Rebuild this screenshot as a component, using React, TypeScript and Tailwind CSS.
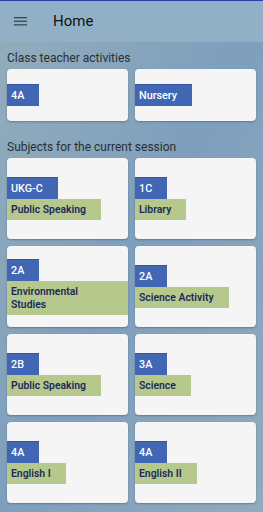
import React from "react";

type Subject = {
  cls: string
  name?: string
}

const teacherClasses: Subject[] = [{ cls: "4A" }, { cls: "Nursery" }];

const subjects: Subject[] = [
  { cls: "UKG-C", name: "Public Speaking" },
  { cls: "1C", name: "Library" },
  { cls: "2A", name: "Environmental Studies" },
  { cls: "2A", name: "Science Activity" },
  { cls: "2B", name: "Public Speaking" },
  { cls: "3A", name: "Science" },
  { cls: "4A", name: "English I" },
  { cls: "4A", name: "English II" },
];

function ClassCard({ item, tall }: { item: Subject; tall?: boolean }) {
  return (
    <div
      className={
        "flex flex-col justify-center items-start rounded-[4px] bg-[#f5f5f5] shadow-[0_1px_2px_rgba(0,0,0,0.25)] " +
        (tall ? "h-[81px]" : "h-[52px]")
      }
    >
      <div className="h-[22px] leading-[22px] pl-[4px] pr-[15px] bg-[#4166b4] text-white text-[10.8px] font-medium border-t border-[#3553a0]">
        {item.cls}
      </div>
      {item.name && (
        <div className="max-w-full py-[4px] pl-[4px] pr-[15px] leading-[13px] bg-[#b6c88b] text-[#1b2a5c] text-[10.4px] font-semibold">
          {item.name}
        </div>
      )}
    </div>
  );
}

export default function App() {
  return (
    <div
      className="w-[263px] h-[512px] overflow-hidden bg-gradient-to-br from-[#93adbb] via-[#7e9fbd] to-[#8fabbd] text-[#222]"
      style={{ fontFamily: "Roboto, 'Noto Sans', sans-serif" }}
    >
      <div className="h-[42px] flex items-center border-t border-[#2a3da8] bg-[#91b0c6]">
        <svg width="14" height="10" viewBox="0 0 14 10" className="ml-[14px]">
          <rect x="0" y="0" width="13" height="1.3" fill="#3d4650" />
          <rect x="0" y="3.6" width="13" height="1.3" fill="#3d4650" />
          <rect x="0" y="7.2" width="13" height="1.3" fill="#3d4650" />
        </svg>
        <span className="ml-[25px] text-[15px] text-[#111]">Home</span>
      </div>

      <div className="px-[7px]">
        <div className="pt-[8px] pb-[3px] text-[12px] leading-[16px] text-[#2a2f33]">Class teacher activities</div>
        <div className="grid grid-cols-2 gap-[7px]">
          {teacherClasses.map((c, i) => (
            <ClassCard key={i} item={c} />
          ))}
        </div>

        <div className="pt-[18px] pb-[3px] text-[12px] leading-[16px] text-[#2a2f33]">Subjects for the current session</div>
        <div className="grid grid-cols-2 gap-[7px]">
          {subjects.map((s, i) => (
            <ClassCard key={i} item={s} tall />
          ))}
        </div>
      </div>
    </div>
  );
}
